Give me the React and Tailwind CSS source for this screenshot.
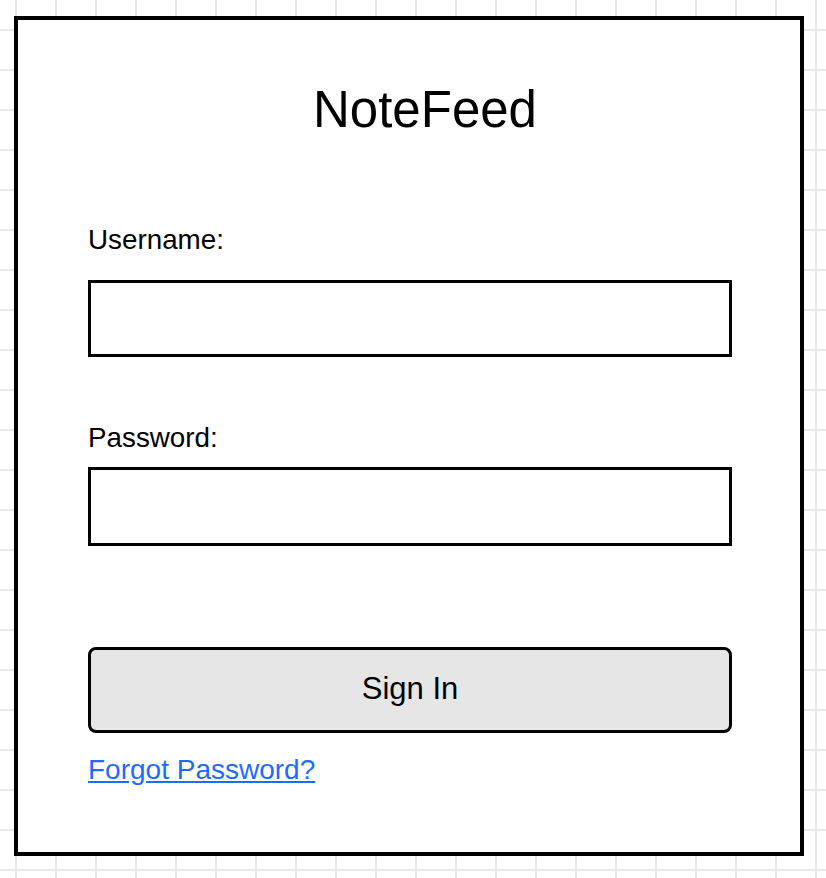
export default function App() {
  return (
    <div className="w-[826px] h-[878px] overflow-hidden bg-white bg-[linear-gradient(to_right,#e8e8e8_2px,transparent_2px),linear-gradient(to_bottom,#e8e8e8_2px,transparent_2px)] bg-size-[40px_40px] bg-position-[15px_29px] pl-[14px] pt-[16px] font-['Liberation_Sans',Arial,sans-serif] text-black">
      <div className="w-[790px] h-[840px] border-[4px] border-black bg-white">
        <h1 className="pt-[64px] pl-[32px] text-center text-[51px] leading-none">
          NoteFeed
        </h1>
        <form className="pl-[70px] pr-[68px] flex flex-col" onSubmit={(e) => e.preventDefault()}>
          <label className="mt-[91px] text-[27.8px] leading-none">Username:</label>
          <input
            type="text"
            className="mt-[26px] h-[77px] border-[3px] border-black bg-white outline-none px-3 text-[24px]"
          />
          <label className="mt-[67px] text-[27.8px] leading-none">Password:</label>
          <input
            type="password"
            className="mt-[15px] h-[79px] border-[3px] border-black bg-white outline-none px-3 text-[24px]"
          />
          <button
            type="submit"
            className="mt-[101px] h-[86px] rounded-[8px] border-[3px] border-black bg-[#e6e6e6] text-[31px]"
          >
            Sign In
          </button>
          <a
            href="#"
            className="mt-[23px] self-start text-[28px] leading-none text-[#1f6bff] underline underline-offset-2"
          >
            Forgot Password?
          </a>
        </form>
      </div>
    </div>
  );
}
